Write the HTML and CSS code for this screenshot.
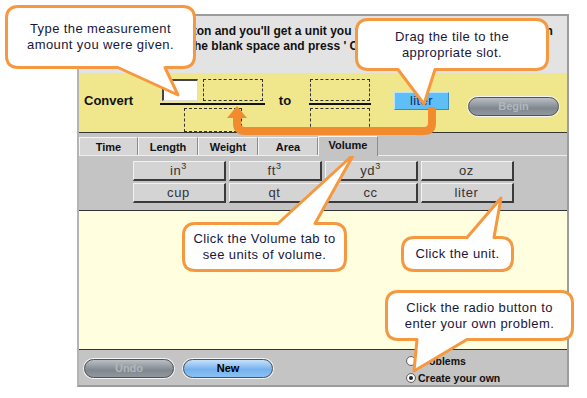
FILE: index.html
```html
<!DOCTYPE html>
<html lang="en">
<head>
  <meta charset="UTF-8">
  <title>Unit Conversion</title>
  <link rel="stylesheet" href="styles.css">
</head>
<body>
<div class="stage">
  <div class="app">
    <div class="intro">
      Click the Begin button and you'll get a unit you need to convert. Drag the unit icon<br>
      on the tile to fill in the blank space and press ' Check'.
    </div>

    <div class="convert">
      <span class="convert-label">Convert</span>
      <div class="fraction">
        <div class="frac-top">
          <div class="answer"></div>
          <div class="slot"></div>
        </div>
        <div class="frac-line"></div>
        <div class="slot low narrow"></div>
      </div>
      <span class="to">to</span>
      <div class="fraction small">
        <div class="slot"></div>
        <div class="frac-line"></div>
        <div class="slot low"></div>
      </div>
      <div class="tile">liter</div>
      <div class="pill grey begin">Begin</div>
    </div>

    <div class="tabs">
      <div class="tab first">Time</div>
      <div class="tab">Length</div>
      <div class="tab">Weight</div>
      <div class="tab">Area</div>
      <div class="tab active">Volume</div>
    </div>

    <div class="units">
      <div class="unit">in<sup>3</sup></div>
      <div class="unit">ft<sup>3</sup></div>
      <div class="unit">yd<sup>3</sup></div>
      <div class="unit">oz</div>
      <div class="unit">cup</div>
      <div class="unit">qt</div>
      <div class="unit">cc</div>
      <div class="unit">liter</div>
    </div>

    <div class="work"></div>

    <div class="bottom">
      <div class="pill grey">Undo</div>
      <div class="pill blue">New</div>
      <div class="modes">
        <label class="mode"><span class="radio"></span>Problems</label>
        <label class="mode"><span class="radio on"></span>Create your own</label>
      </div>
    </div>
  </div>

  <!-- callouts and drag arrow drawn over the applet -->
  <svg class="overlay" width="587" height="398" viewBox="0 0 587 398">
    <path class="drag" d="M432 107 V123 Q432 131 424 131 H245 Q237 131 237 123 V115"/>
    <polygon class="drag-head" points="227,118 247,118 237,106"/>
    <path class="bubble" d="M18.5 6.5 H182.5 Q194.5 6.5 194.5 18.5 V55.5 Q194.5 67.5 182.5 67.5 H165 L178 95 L118 67.5 H18.5 Q6.5 67.5 6.5 55.5 V18.5 Q6.5 6.5 18.5 6.5 Z"/>
    <path class="bubble" d="M368.5 19.5 H535.5 Q547.5 19.5 547.5 31.5 V57.5 Q547.5 69.5 535.5 69.5 H435 L424 104 L398 69.5 H368.5 Q356.5 69.5 356.5 57.5 V31.5 Q356.5 19.5 368.5 19.5 Z"/>
    <path class="bubble" d="M195.5 223.5 H278 L354 154 L315 223.5 H333.5 Q345.5 223.5 345.5 235.5 V258.5 Q345.5 270.5 333.5 270.5 H195.5 Q183.5 270.5 183.5 258.5 V235.5 Q183.5 223.5 195.5 223.5 Z"/>
    <path class="bubble" d="M414.5 237.5 H467 L501 198 L494 237.5 H500.5 Q512.5 237.5 512.5 249.5 V258.5 Q512.5 270.5 500.5 270.5 H414.5 Q402.5 270.5 402.5 258.5 V249.5 Q402.5 237.5 414.5 237.5 Z"/>
    <path class="bubble" d="M398.5 291.5 H560.5 Q572.5 291.5 572.5 303.5 V327.5 Q572.5 339.5 560.5 339.5 H467 L414 371 L417 339.5 H398.5 Q386.5 339.5 386.5 327.5 V303.5 Q386.5 291.5 398.5 291.5 Z"/>
  </svg>

  <div class="note note-type">Type the measurement<br>amount you were given.</div>
  <div class="note note-drag">Drag the tile to the<br>appropriate slot.</div>
  <div class="note note-tab">Click the Volume tab to<br>see units of volume.</div>
  <div class="note note-unit">Click the unit.</div>
  <div class="note note-radio">Click the radio button to<br>enter your own problem.</div>
</div>
</body>
</html>
```

FILE: styles.css
```css
body { margin:0; background:#fff; font-family:"Liberation Sans", Arial, sans-serif; color:#111; }
.stage { position:relative; width:587px; height:398px; overflow:hidden; }

/* applet frame */
.app { margin:14px 0 0 77px; width:488px; border:2px solid #9c9c9c; border-left-color:#b4b4b4; }
.intro { height:57px; box-sizing:border-box; padding:8px 0 0 5px; background:#e3e3e3; font-size:12px; font-weight:bold; line-height:15px; white-space:nowrap; overflow:hidden; }

/* convert row */
.convert { height:59px; background:#f0e68c; border-bottom:1px solid #333; display:flex; align-items:flex-start; padding-left:5px; }
.convert-label { width:76px; margin-top:20px; font-size:13px; font-weight:bold; line-height:16px; }
.fraction { width:105px; margin-top:6px; display:flex; flex-direction:column; align-items:center; }
.fraction.small { width:62px; }
.frac-top { display:flex; gap:5px; }
.frac-line { align-self:stretch; height:2px; background:#111; margin:2px 0 3px; }
.answer { width:36px; height:22px; box-sizing:border-box; background:#fff; border:1px solid #ddd; border-top:2px solid #444; border-left:2px solid #444; }
.slot { width:60px; height:22px; box-sizing:border-box; border:1px dashed #333; }
.slot.low { height:24px; }
.slot.narrow { width:58px; }
.to { width:40px; margin-top:20px; text-align:center; font-size:13px; font-weight:bold; line-height:16px; margin-right:4px; }
.tile { width:55px; height:18px; box-sizing:border-box; margin:19px 0 0 23px; background:#5ebff7; border:1px solid; border-color:#b9e3fb #3c8cc2 #3c8cc2 #b9e3fb; text-align:center; font-size:13px; line-height:16px; color:#1d2660; letter-spacing:.4px; }

/* rounded applet buttons */
.pill { width:90px; height:19px; box-sizing:border-box; border:1px solid #4e5358; border-radius:10px; box-shadow:0 0 0 1px #f4f4f4; text-align:center; font-size:11px; font-weight:bold; line-height:17px; }
.pill.grey { background:linear-gradient(#b9bfc5, #80878e 60%, #90979d); color:#b2b7bc; }
.pill.blue { background:linear-gradient(#c6e2fb, #76b2ee 55%, #8cc0f2); color:#000; margin-left:9px; }
.pill.begin { width:91px; margin:24px 0 0 19px; }

/* tabs */
.tabs { height:22px; box-sizing:border-box; background:#c4c4c4; display:flex; align-items:flex-end; }
.tab { width:60px; height:18px; box-sizing:border-box; background:#d6d6d6; border:1px solid; border-color:#f4f4f4 #8c8c8c transparent #f4f4f4; border-bottom:0; text-align:center; font-size:11px; font-weight:bold; line-height:18px; }
.tab.first { width:59px; }
.tab.active { position:relative; z-index:1; height:20px; margin-bottom:-1px; background:#c4c4c4; line-height:17px; }

.units { height:55px; box-sizing:border-box; background:#c4c4c4; border-top:1px solid #eee; padding-top:5px; display:grid; grid-template-columns:repeat(4, 93px); grid-auto-rows:20px; gap:2px 3px; justify-content:center; align-content:start; }
.unit { box-sizing:border-box; background:#d4d4d4; border-style:solid; border-width:1px 2px 2px 1px; border-color:#f2f2f2 #3a3a3a #3a3a3a #f2f2f2; text-align:center; font-size:13px; line-height:17px; color:#333; letter-spacing:.6px; }
.unit sup { font-size:9px; line-height:0; vertical-align:6px; }

.work { height:138px; background:#ffffe0; border-top:1px solid #333; border-bottom:1px solid #333; }

.bottom { height:35px; box-sizing:border-box; background:#c4c4c4; display:flex; align-items:flex-start; padding:9px 0 0 5px; }
.modes { margin:-7px 0 0 133px; display:flex; flex-direction:column; }
.mode { display:flex; align-items:center; gap:2px; height:17px; font-size:10.5px; font-weight:bold; }
.radio { width:10px; height:10px; box-sizing:border-box; border-radius:50%; background:radial-gradient(#fff 40%, #ddd); border:1px solid #666; display:flex; align-items:center; justify-content:center; }
.radio.on::after { content:""; width:4px; height:4px; border-radius:50%; background:#222; }

/* overlay */
.overlay { position:absolute; left:0; top:0; }
.bubble { fill:#fff; stroke:#f5983f; stroke-width:3; stroke-linejoin:round; }
.drag { fill:none; stroke:#f28a2e; stroke-width:8; }
.drag-head { fill:#f28a2e; }
.note { position:absolute; display:flex; align-items:center; justify-content:center; text-align:center; font-size:13px; line-height:16px; color:#17173a; letter-spacing:.4px; }
.note-type { left:5px; top:5px; width:191px; height:64px; }
.note-drag { left:355px; top:18px; width:194px; height:53px; }
.note-tab { left:182px; top:222px; width:165px; height:50px; }
.note-unit { left:401px; top:236px; width:113px; height:36px; }
.note-radio { left:385px; top:290px; width:189px; height:51px; }
```
